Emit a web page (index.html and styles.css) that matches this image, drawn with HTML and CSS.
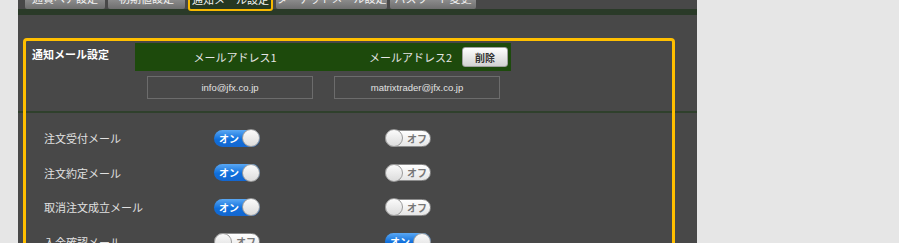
FILE: index.html
```html
<!DOCTYPE html>
<html lang="ja">
<head>
  <meta charset="UTF-8">
  <title>通知メール設定</title>
  <link rel="stylesheet" href="styles.css">
</head>
<body>
  <div class="panel">
    <div class="tabs">
      <div class="tab tab-pair">通貨ペア設定</div>
      <div class="tab tab-init">初期値設定</div>
      <div class="tab tab-mail active">通知メール設定</div>
      <div class="tab tab-target">ターゲットメール設定</div>
      <div class="tab tab-pass">パスワード変更</div>
    </div>
    <div class="band"></div>

    <div class="mail-head">
      <div class="mail-title">通知メール設定</div>
      <div class="mail-cols">
        <div class="mail-col first">メールアドレス1</div>
        <div class="mail-col second">
          メールアドレス2
          <button class="btn-delete" type="button">削除</button>
        </div>
      </div>
    </div>

    <div class="mail-addrs">
      <div class="addr">info@jfx.co.jp</div>
      <div class="addr">matrixtrader@jfx.co.jp</div>
    </div>

    <div class="sep"></div>

    <div class="rows">
      <div class="row">
        <div class="row-label">注文受付メール</div>
        <div class="row-cell"><span class="toggle on"><span class="toggle-text">オン</span><span class="knob"></span></span></div>
        <div class="row-cell"><span class="toggle off"><span class="knob"></span><span class="toggle-text">オフ</span></span></div>
      </div>
      <div class="row">
        <div class="row-label">注文約定メール</div>
        <div class="row-cell"><span class="toggle on"><span class="toggle-text">オン</span><span class="knob"></span></span></div>
        <div class="row-cell"><span class="toggle off"><span class="knob"></span><span class="toggle-text">オフ</span></span></div>
      </div>
      <div class="row">
        <div class="row-label">取消注文成立メール</div>
        <div class="row-cell"><span class="toggle on"><span class="toggle-text">オン</span><span class="knob"></span></span></div>
        <div class="row-cell"><span class="toggle off"><span class="knob"></span><span class="toggle-text">オフ</span></span></div>
      </div>
      <div class="row">
        <div class="row-label">入金確認メール</div>
        <div class="row-cell"><span class="toggle off"><span class="knob"></span><span class="toggle-text">オフ</span></span></div>
        <div class="row-cell"><span class="toggle on"><span class="toggle-text">オン</span><span class="knob"></span></span></div>
      </div>
    </div>

    <!-- highlight frame over the section -->
    <div class="highlight"></div>
  </div>
</body>
</html>
```

FILE: styles.css
```css
body {
  margin: 0;
  background: #e6e6e6;
  font-family: "Noto Sans CJK JP", "Noto Sans", sans-serif;
}
.panel {
  position: relative;
  display: flow-root;
  margin-left: 18px;
  width: 679px;
  min-height: 280px;
  background: #484848;
}
.tabs {
  display: flex;
  align-items: flex-start;
  gap: 3px;
  height: 22px;
  margin-top: -13px;
  padding-left: 7px;
}
.tab {
  box-sizing: border-box;
  height: 22px;
  line-height: 22px;
  text-align: center;
  white-space: nowrap;
  font-size: 11px;
  color: #f2f2f2;
  background: linear-gradient(#b4b4b4, #6e6e6e);
  border-radius: 0 0 2px 2px;
}
.tab-pair { width: 80px; }
.tab-init { width: 77px; }
.tab-mail { width: 85px; }
.tab-target { width: 111px; }
.tab-pass { width: 86px; }
.tab.active {
  position: relative;
  z-index: 1;
  height: 24px;
  line-height: 20px;
  background: #253822;
  border: 2px solid #f7b900;
  border-radius: 0 0 3px 3px;
}
.band {
  height: 6px;
  background: #2a3a28;
}
.mail-head {
  display: flex;
  margin-top: 28px;
}
.mail-title {
  width: 103px;
  padding: 4px 0 0 14px;
  font-size: 11px;
  line-height: 14px;
  font-weight: bold;
  color: #fff;
}
.mail-cols {
  display: flex;
  width: 376px;
  height: 28px;
  background: #1d4a0c;
  font-size: 11px;
  color: #e6e6e6;
}
.mail-col {
  display: flex;
  align-items: center;
}
.mail-col.first {
  width: 200px;
  justify-content: center;
}
.mail-col.second {
  flex: 1;
  justify-content: flex-end;
  gap: 10px;
  padding-right: 3px;
}
.btn-delete {
  width: 46px;
  height: 20px;
  padding: 0;
  border: 1px solid #a0a0a0;
  border-radius: 3px;
  background: linear-gradient(#ffffff, #d2d2d2);
  font-family: "Noto Sans CJK JP", sans-serif;
  font-size: 10px;
  font-weight: bold;
  color: #333;
}
.mail-addrs {
  display: flex;
  gap: 21px;
  margin: 5px 0 0 129px;
}
.addr {
  box-sizing: border-box;
  width: 166px;
  height: 23px;
  line-height: 21px;
  border: 1px solid #6c6c6c;
  text-align: center;
  font-family: "Liberation Sans", Arial, sans-serif;
  font-size: 9.5px;
  color: #e2e2e2;
}
.sep {
  margin-top: 12px;
  height: 2px;
  background: #2f402c;
}
.rows {
  padding: 8px 0 0 26px;
}
.row {
  display: flex;
  align-items: center;
  height: 34.5px;
}
.row-label {
  width: 170px;
  font-size: 11px;
  color: #e0e0e0;
}
.row-cell {
  width: 171px;
  display: flex;
}
.toggle {
  box-sizing: border-box;
  display: flex;
  align-items: center;
  width: 46px;
  height: 17px;
  border-radius: 9px;
  font-size: 10px;
  font-weight: bold;
}
.toggle.on {
  justify-content: space-between;
  background: linear-gradient(#5aa8f4, #0f6fdc 55%, #1466cf);
  color: #fff;
  padding-left: 5px;
}
.toggle.off {
  background: linear-gradient(#ffffff, #e6e6e6);
  border: 1px solid #8c8c8c;
  color: #777;
}
.toggle.off .toggle-text {
  margin-left: 4px;
}
.knob {
  box-sizing: border-box;
  width: 18px;
  height: 18px;
  border-radius: 50%;
  background: linear-gradient(#fbfbfb, #dcdcdc);
  border: 1px solid #9a9a9a;
}
.toggle.off .knob {
  margin-left: -1px;
}
.highlight {
  position: absolute;
  left: 5px;
  top: 38px;
  width: 652px;
  height: 260px;
  box-sizing: border-box;
  border: 3px solid #ffbf00;
  border-radius: 4px;
  pointer-events: none;
}
```
